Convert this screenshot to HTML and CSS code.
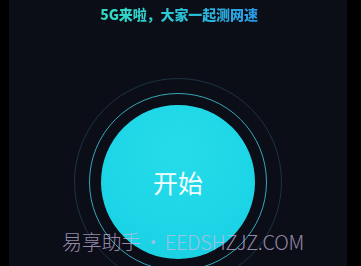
FILE: index.html
```html
<!DOCTYPE html>
<html lang="zh">
<head>
<meta charset="utf-8">
<link rel="stylesheet" href="styles.css">
</head>
<body>
<div class="screen">
  <h1 class="title">5G来啦，大家一起测网速</h1>
  <div class="rings">
    <div class="ring-outer">
      <div class="ring-mid">
        <div class="start">开始</div>
      </div>
    </div>
  </div>
  <div class="watermark">易享助手 • EEDSHZJZ.COM</div>
</div>
</body>
</html>
```

FILE: styles.css
```css
html, body {
  margin: 0;
  padding: 0;
  background: #000;
}
.screen {
  position: relative;
  width: 338px;
  height: 266px;
  margin-left: 9px;
  background: #0b0e17;
  overflow: hidden;
  display: flex;
  flex-direction: column;
  align-items: center;
}
.title {
  margin: 5px 0 0 2px;
  font-family: "Noto Sans CJK SC", sans-serif;
  font-weight: 900;
  font-size: 14px;
  line-height: 18px;
  letter-spacing: -0.1px;
  background: linear-gradient(90deg, #33dcc0 0%, #2bc4d6 50%, #2a98e4 100%);
  -webkit-background-clip: text;
  background-clip: text;
  color: transparent;
}
.rings {
  margin-top: 55px;
  display: flex;
  justify-content: center;
}
.ring-outer {
  width: 208px;
  height: 208px;
  border-radius: 50%;
  border: 1px solid #1b3441;
  box-sizing: border-box;
  display: flex;
  align-items: center;
  justify-content: center;
}
.ring-mid {
  width: 178px;
  height: 178px;
  border-radius: 50%;
  border: 1.5px solid #36a6b6;
  box-sizing: border-box;
  display: flex;
  align-items: center;
  justify-content: center;
}
.start {
  width: 154px;
  height: 154px;
  border-radius: 50%;
  background: radial-gradient(circle at 50% 30%, #27dcea 0%, #1cd5e6 60%, #19cfe2 100%);
  display: flex;
  align-items: center;
  justify-content: center;
  font-family: "Noto Sans CJK SC", sans-serif;
  font-size: 25px;
  color: #f2fdff;
}
.watermark {
  position: absolute;
  left: 53px;
  top: 230px;
  font-family: "Noto Sans CJK SC", sans-serif;
  font-weight: 300;
  font-size: 20px;
  line-height: 24px;
  word-spacing: -2px;
  letter-spacing: -0.3px;
  color: rgba(205, 185, 225, 0.72);
  white-space: nowrap;
}
```
